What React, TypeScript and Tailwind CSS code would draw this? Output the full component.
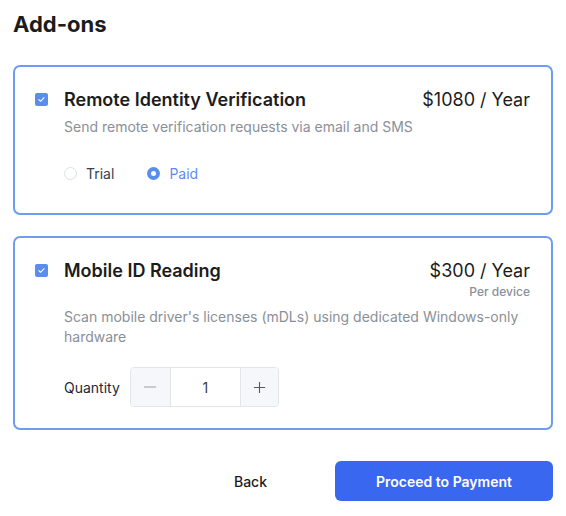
import React, { useState } from 'react';

const CheckIcon = () => (
  <svg viewBox="0 0 12 12" className="h-[9px] w-[9px]" fill="none">
    <path d="M2.5 6.2l2.2 2.2 4.8-4.8" stroke="white" strokeWidth="1.4" strokeLinecap="round" strokeLinejoin="round" />
  </svg>
);

function Checkbox({ checked, onChange }: { checked: boolean; onChange: () => void }) {
  return (
    <button
      onClick={onChange}
      className={`mt-[4px] flex h-[13px] w-[13px] shrink-0 items-center justify-center rounded-[2px] ${
        checked ? 'bg-[#5b8def]' : 'border border-gray-300 bg-white'
      }`}
    >
      {checked && <CheckIcon />}
    </button>
  );
}

function Radio({ label, selected, onClick }: { label: string; selected: boolean; onClick: () => void }) {
  return (
    <button onClick={onClick} className="flex items-center gap-[9px]">
      <span
        className={`flex h-[13px] w-[13px] items-center justify-center rounded-full ${
          selected ? 'bg-[#5b8def]' : 'border border-[#dcdfe6] bg-white'
        }`}
      >
        {selected && <span className="h-[5px] w-[5px] rounded-full bg-white" />}
      </span>
      <span className={`text-[14px] ${selected ? 'text-[#5b8def]' : 'text-[#374151]'}`}>{label}</span>
    </button>
  );
}

export default function App() {
  const [remote, setRemote] = useState(true);
  const [mobile, setMobile] = useState(true);
  const [plan, setPlan] = useState<'trial' | 'paid'>('paid');
  const [qty, setQty] = useState(1);

  return (
    <div className="min-h-screen bg-white px-[13px] pt-[9px] font-['Inter',sans-serif] text-[#1a1a1a]">
      <h1 className="text-[22px] font-bold leading-[30px] text-[#1c1c1c]">Add-ons</h1>

      {/* Remote identity */}
      <div className="mt-[26px] rounded-[7px] border-2 border-[#6d9cf3] pl-[20px] pr-[21px] pt-[22px] pb-[29px]">
        <div className="flex gap-[16px]">
          <Checkbox checked={remote} onChange={() => setRemote(!remote)} />
          <div className="flex-1">
            <div className="flex items-start justify-between">
              <h2 className="text-[18px] font-semibold leading-[22px] text-[#1c1c1c]">Remote Identity Verification</h2>
              <span className="text-[18px] leading-[22px] text-[#1c1c1c]">$1080 / Year</span>
            </div>
            <p className="mt-[6px] text-[14px] leading-[20px] text-[#8a8f98]">
              Send remote verification requests via email and SMS
            </p>
            <div className="mt-[26px] flex gap-[33px]">
              <Radio label="Trial" selected={plan === 'trial'} onClick={() => setPlan('trial')} />
              <Radio label="Paid" selected={plan === 'paid'} onClick={() => setPlan('paid')} />
            </div>
          </div>
        </div>
      </div>

      {/* Mobile ID */}
      <div className="mt-[21px] rounded-[7px] border-2 border-[#6d9cf3] pl-[20px] pr-[21px] pt-[22px] pb-[21px]">
        <div className="flex gap-[16px]">
          <Checkbox checked={mobile} onChange={() => setMobile(!mobile)} />
          <div className="flex-1">
            <div className="flex items-start justify-between">
              <h2 className="text-[18px] font-semibold leading-[22px] text-[#1c1c1c]">Mobile ID Reading</h2>
              <div className="text-right">
                <div className="text-[18px] leading-[22px] text-[#1c1c1c]">$300 / Year</div>
                <div className="mt-[2px] text-[12px] font-medium leading-[16px] text-[#8a8f98]">Per device</div>
              </div>
            </div>
            <p className="mt-[7px] text-[14px] leading-[20px] text-[#8a8f98]">
              Scan mobile driver's licenses (mDLs) using dedicated Windows-only hardware
            </p>
            <div className="mt-[20px] flex items-center gap-[10px]">
              <span className="text-[14px] text-[#1f2937]">Quantity</span>
              <div className="flex h-[40px] overflow-hidden rounded-[4px] border border-[#e2e5ea]">
                <button
                  onClick={() => setQty(Math.max(1, qty - 1))}
                  className="flex w-[40px] items-center justify-center border-r border-[#e2e5ea] bg-[#f5f7fa] text-[#9aa0a8]"
                >
                  <svg viewBox="0 0 14 14" className="h-[14px] w-[14px]">
                    <path d="M1 7h12" stroke="currentColor" strokeWidth="1.2" />
                  </svg>
                </button>
                <div className="flex w-[69px] items-center justify-center text-[14px] text-[#374151]">{qty}</div>
                <button
                  onClick={() => setQty(qty + 1)}
                  className="flex w-[38px] items-center justify-center border-l border-[#e2e5ea] bg-[#f5f7fa] text-[#555b63]"
                >
                  <svg viewBox="0 0 14 14" className="h-[13px] w-[13px]">
                    <path d="M1 7h12M7 1v12" stroke="currentColor" strokeWidth="1.2" />
                  </svg>
                </button>
              </div>
            </div>
          </div>
        </div>
      </div>

      <div className="mt-[31px] flex items-center justify-end">
        <button className="mr-[68px] text-[14px] font-medium text-[#1c1c1c]">Back</button>
        <button className="h-[40px] w-[218px] rounded-[6px] bg-[#3a67ef] text-[14px] font-semibold text-white">
          Proceed to Payment
        </button>
      </div>
    </div>
  );
}
